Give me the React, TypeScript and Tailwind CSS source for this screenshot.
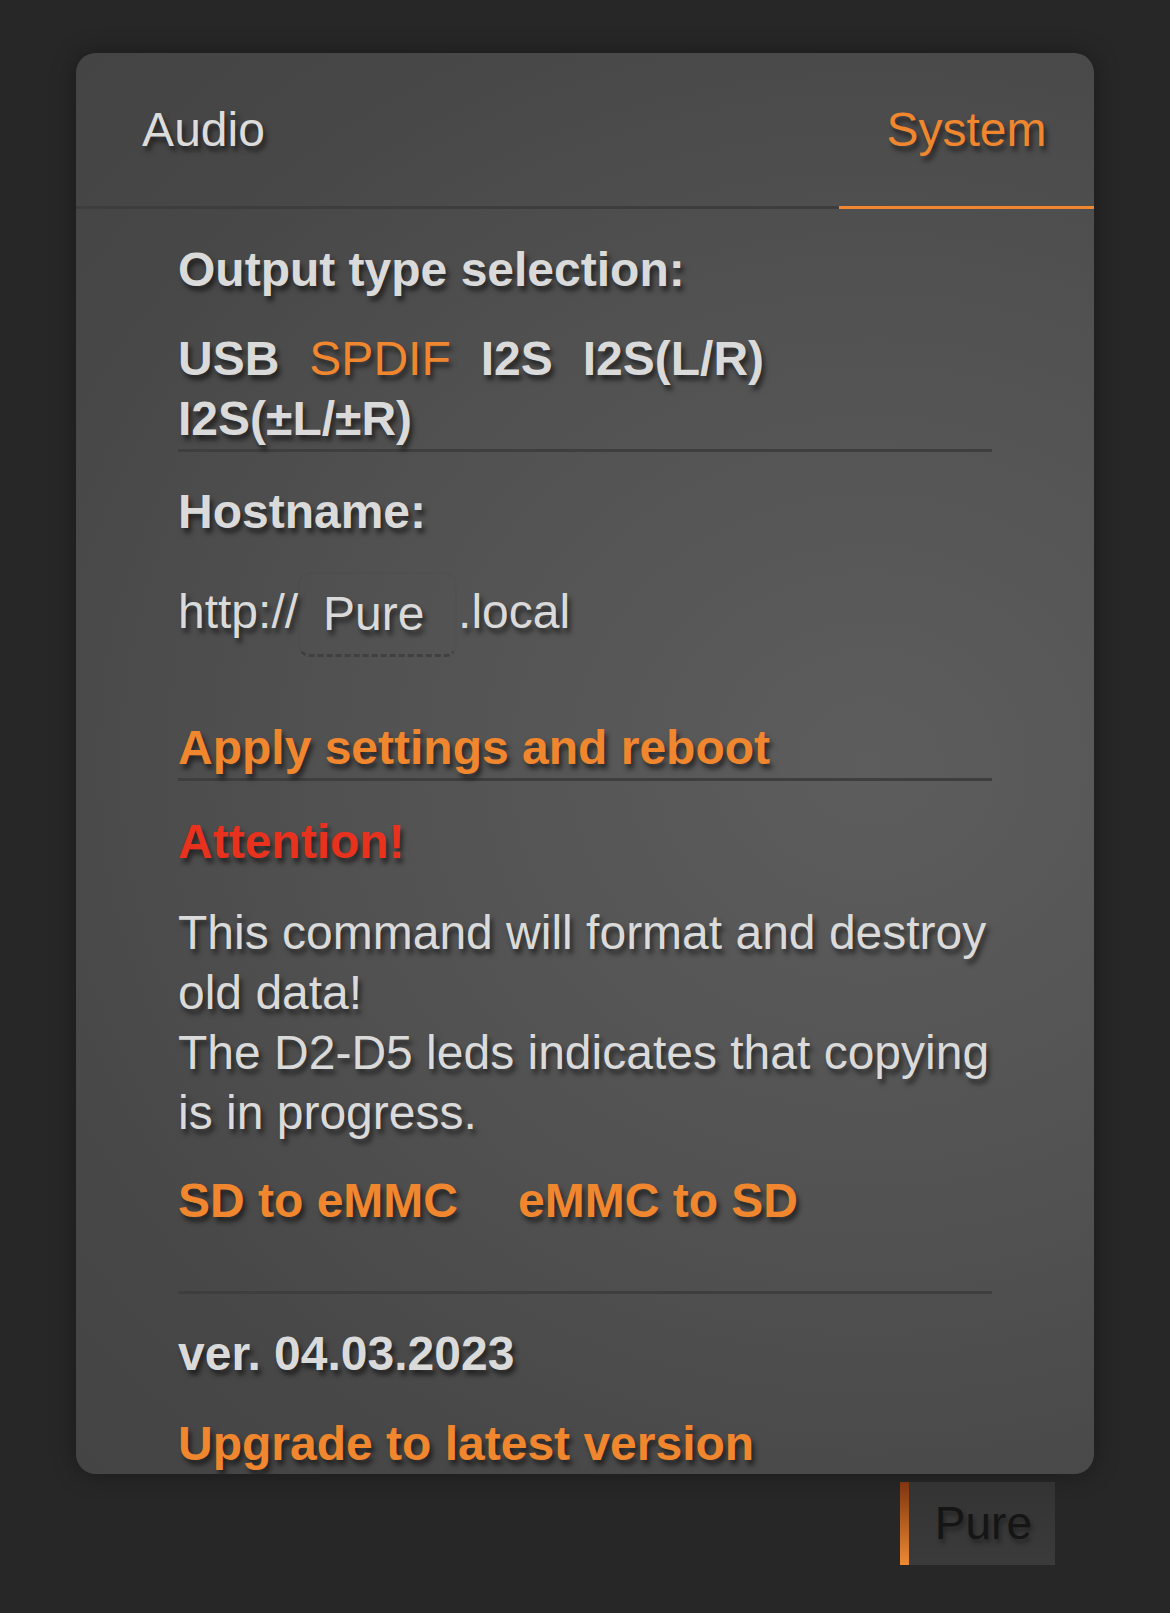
export default function App() {
  return (
    <div className="min-h-[1613px] w-full bg-[#272727] pt-[53px] font-['Liberation_Sans',Arial,sans-serif]">
      <div className="ml-[76px] w-[1018px] h-[1421px] rounded-[20px] overflow-hidden bg-[radial-gradient(ellipse_at_78%_50%,#5d5d5d_0%,#525252_45%,#474747_80%,#444444_100%)] shadow-[0_0_24px_rgba(0,0,0,0.35)]">
        {/* tabs */}
        <div className="flex justify-between h-[153px]">
          <div className="w-[255px] flex items-center justify-center text-[48px] text-[#dcdcdc] [text-shadow:3px_5px_5px_rgba(0,0,0,0.55)]">
            Audio
          </div>
          <div className="w-[255px] flex items-center justify-center text-[48px] text-[#f0872f] [text-shadow:3px_5px_5px_rgba(0,0,0,0.55)]">
            System
          </div>
        </div>
        <div className="flex h-[3px]">
          <div className="flex-1 bg-[#3d3d3d]" />
          <div className="w-[255px] bg-[#f0872f]" />
        </div>

        {/* content */}
        <div className="px-[102px] pt-[31px] text-[48px] leading-[60px] text-[#dadada] [text-shadow:3px_5px_5px_rgba(0,0,0,0.55)]">
          <div className="font-bold">Output type selection:</div>
          <div className="mt-[29px] flex flex-wrap gap-x-[30px] border-b-[3px] border-[#3e3e3e]">
            <span className="font-bold">USB</span>
            <span className="text-[#f0872f]">SPDIF</span>
            <span className="font-bold">I2S</span>
            <span className="font-bold">I2S(L/R)</span>
            <span className="font-bold">I2S(±L/±R)</span>
          </div>

          <div className="mt-[30px] font-bold">Hostname:</div>
          <div className="mt-[30px] flex items-start">
            <span className="pt-[10px]">http://</span>
            <span className="w-[159px] h-[85px] pt-[10px] pl-[23px] rounded-[12px] border-[2px] border-[rgba(0,0,0,0.025)] border-b-[3px] border-b-[#404040] [border-bottom-style:dashed]">
              Pure
            </span>
            <span className="pt-[10px] pl-[1px]">.local</span>
          </div>

          <div className="mt-[61px] font-bold text-[#f0872f] border-b-[3px] border-[#3e3e3e]">
            Apply settings and reboot
          </div>

          <div className="mt-[31px] font-bold text-[#e9321e]">Attention!</div>
          <div className="mt-[31px]">
            This command will format and destroy old data!
            <br />
            The D2-D5 leds indicates that copying is in progress.
          </div>
          <div className="mt-[28px] flex gap-x-[60px] font-bold text-[#f0872f] border-b-[3px] border-[#3e3e3e] pb-[60px]">
            <span>SD to eMMC</span>
            <span>eMMC to SD</span>
          </div>

          <div className="mt-[30px] font-bold">ver. 04.03.2023</div>
          <div className="mt-[30px] font-bold text-[#f0872f]">Upgrade to latest version</div>
        </div>
      </div>

      <div className="flex justify-end mr-[115px] mt-[8px]">
        <div className="flex h-[83px]">
          <div className="w-[9px] bg-gradient-to-b from-[#7e3510] to-[#ee8a33]" />
          <div className="pl-[26px] pr-[23px] bg-gradient-to-b from-[#333333] to-[#3b3b3b] text-[46px] leading-[83px] text-[#151515] [text-shadow:2px_4px_4px_rgba(0,0,0,0.35)]">
            Pure
          </div>
        </div>
      </div>
    </div>
  );
}
